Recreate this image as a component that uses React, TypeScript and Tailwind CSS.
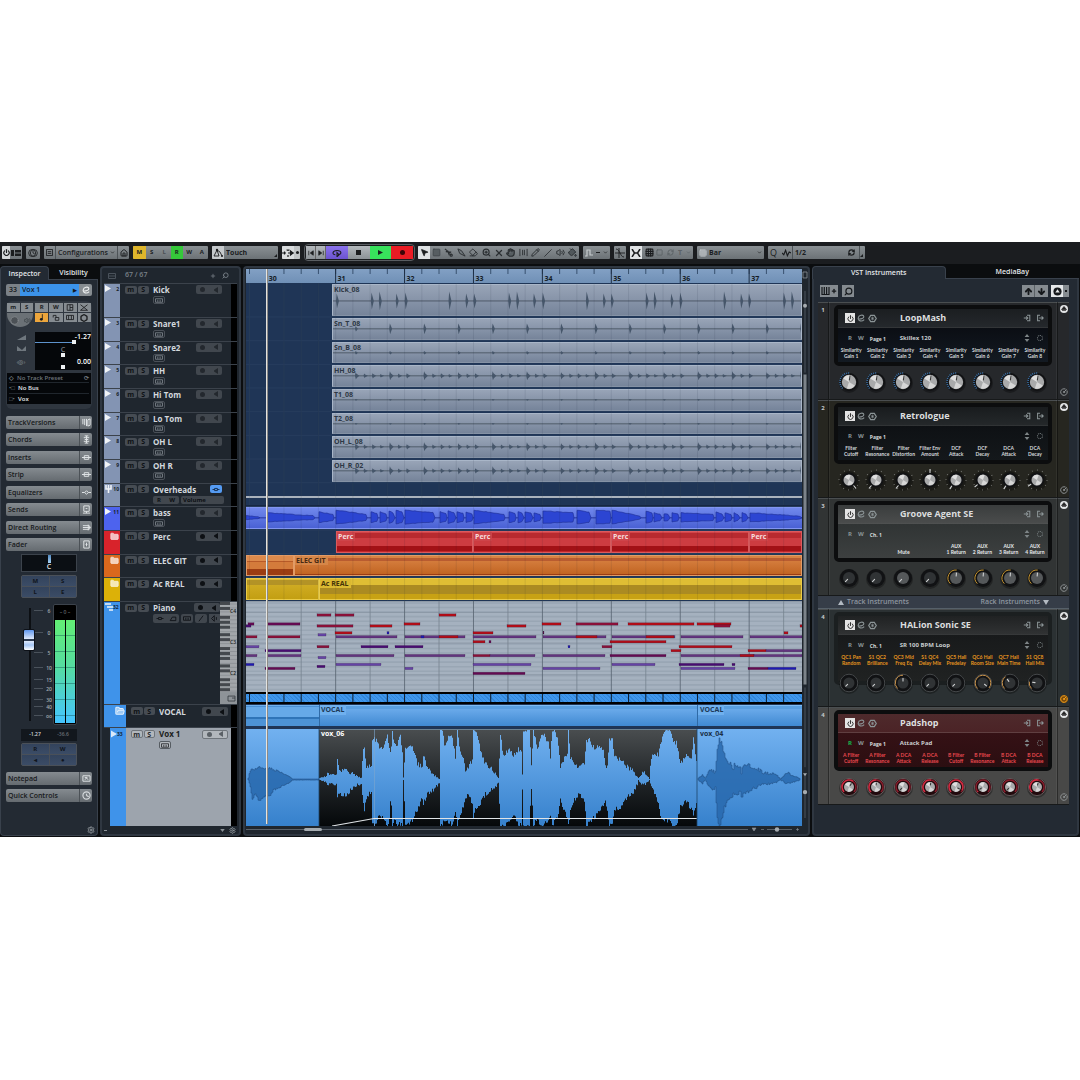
import React from "react";
import {
  ArrowDown,
  ArrowUp,
  ChevronDown,
  Circle,
  CircleGauge,
  Eraser,
  FolderOpen,
  Folder,
  Grid3x3,
  Hand,
  Hexagon,
  Home,
  MousePointer2,
  PaintBucket,
  Pencil,
  Plus,
  Power,
  RefreshCw,
  Search,
  Settings,
  Slash,
  Square,
  Volume2,
  X,
  ZoomIn,
} from "lucide-react";

type Point = [number, number, number];

interface Track {
  num: string;
  name: string;
  color: string;
  kind: "audio" | "group" | "folder";
  clip?: string;
  pattern?: string;
}

const TRACKS: Track[] = [
  { num: "3", name: "Snare1", color: "bg-[#8394b3]", kind: "audio", clip: "Sn_T_08", pattern: "snare" },
  { num: "4", name: "Snare2", color: "bg-[#8394b3]", kind: "audio", clip: "Sn_B_08", pattern: "small" },
  { num: "5", name: "HH", color: "bg-[#8394b3]", kind: "audio", clip: "HH_08", pattern: "hat" },
  { num: "6", name: "Hi Tom", color: "bg-[#8394b3]", kind: "audio", clip: "T1_08", pattern: "flat" },
  { num: "7", name: "Lo Tom", color: "bg-[#8394b3]", kind: "audio", clip: "T2_08", pattern: "flat" },
  { num: "8", name: "OH L", color: "bg-[#8394b3]", kind: "audio", clip: "OH_L_08", pattern: "over" },
  { num: "9", name: "OH R", color: "bg-[#8394b3]", kind: "audio", clip: "OH_R_02", pattern: "over" },
  { num: "10", name: "Overheads", color: "bg-[#8394b3]", kind: "group" },
  { num: "11", name: "bass", color: "bg-[#4d63ee]", kind: "audio" },
  { num: "", name: "Perc", color: "bg-[#d8232b]", kind: "folder" },
  { num: "", name: "ELEC GIT", color: "bg-[#d9681d]", kind: "folder" },
  { num: "", name: "Ac REAL", color: "bg-[#dcb108]", kind: "folder" },
];

// Timeline is 556 units wide, a bar is 69 units and bar 30 starts at 21
const TIMELINE = 556;
const BEATS = Array.from({ length: 32 }, (_, i) => 3.5 + i * 17.23);
const BARS = [30, 31, 32, 33, 34, 35, 36, 37].map((bar, i) => ({ bar, x: 20.7 + i * 68.92 }));

const pct = (x: number) => `${(x / TIMELINE) * 100}%`;

// small repeatable noise so the waves look the same on every render
const noise = (i: number) => {
  const s = Math.sin(i * 127.1 + 11.7) * 43758.5453;
  return s - Math.floor(s);
};

const hits = (pattern: string): [number, number][] => {
  const out: [number, number][] = [];
  if (pattern === "kick") {
    [0, 138, 276, 414].forEach((base) =>
      [0, 35, 43, 60, 69, 113, 130].forEach((x, i) => out.push([90 + base + x, 8 + (i % 3)]))
    );
    return out;
  }
  for (let i = 0; i < 14; i++) {
    const x = 109 + i * 34.4;
    if (pattern === "snare") out.push([x, i === 0 ? 3 : 6]);
    if (pattern === "small") out.push([x, 2]);
    if (pattern === "flat") out.push([x, 1]);
    if (pattern === "hat" || pattern === "over") {
      out.push([x, i % 3 === 0 ? 4 : 5]);
      out.push([x + 8.6, 2.5]);
      out.push([x + 17, 3]);
      if (i % 2 === 0) out.push([x + 25, 2]);
    }
  }
  return out;
};

const hitPath = (pattern: string, mid: number) => {
  const wide = pattern === "hat" || pattern === "over" ? 3.5 : 2;
  return hits(pattern)
    .map(([x, a]) => `M${x - 1} ${mid}L${x - 0.3} ${mid - a}L${x + 0.6} ${mid - a * 0.6}L${x + wide} ${mid}L${x + 0.8} ${mid + a * 0.6}L${x} ${mid + a}Z`)
    .join("");
};

const BASS: [number, number, number, number][] = [
  [0, 14, 3, 1.5], [21, 69, 6, 2.5], [73, 88, 7, 4], [90, 121, 9, 4], [125, 132, 7, 5], [134, 141, 7, 4],
  [143, 149, 8, 5], [150, 158, 9, 6], [159, 189, 9, 6], [194, 201, 7, 5], [202, 210, 8, 5], [211, 218, 7, 5],
  [220, 227, 7, 4], [228, 259, 9, 4], [263, 270, 7, 5], [272, 278, 7, 5], [279, 287, 7, 5], [288, 295, 6, 4],
  [297, 328, 8, 6], [331, 345, 9, 6], [350, 365, 9, 8], [366, 395, 9, 2], [400, 407, 8, 5], [408, 416, 6, 4],
  [418, 424, 5, 4], [426, 433, 6, 4], [435, 468, 6, 4], [470, 478, 7, 4], [479, 486, 6, 4], [488, 494, 6, 3],
  [496, 502, 6, 4], [504, 556, 6, 2],
];

const bassPath = () =>
  BASS.map(([x0, x1, a0, a1]) => {
    let top = `M${x0} 11`;
    let bottom = "";
    for (let x = x0; x < x1; x += 2) {
      const a = a0 + ((a1 - a0) * (x - x0)) / (x1 - x0) - noise(x) * 0.7;
      top += `L${x} ${11 - a}`;
      bottom = `L${x} ${11 + a * 0.8}` + bottom;
    }
    return `${top}L${x1} 11${bottom}Z`;
  }).join("");

// x, upper edge, lower edge
const VOX_MAIN: Point[] = [
  [73, 49, 51], [80, 47, 53], [81, 45, 55], [90, 45, 55], [91, 29, 68], [93, 40, 66], [101, 42, 65], [107, 45, 58],
  [115, 49, 55], [117, 18, 76], [118, 18, 80], [120, 38, 71], [125, 38, 61], [126, 13, 93], [128, 9, 97],
  [131, 13, 90], [134, 20, 85], [137, 20, 91], [141, 8, 97], [143, 18, 91], [144.5, 28, 65], [146, 2, 97],
  [148, 15, 88], [151, 16, 96], [154, 5, 95], [156, 25, 95], [157, 48, 51], [159, 20, 97], [166, 16, 91],
  [171, 35, 81], [176, 38, 68], [177, 25, 75], [181, 38, 65], [186, 45, 61], [193, 50, 55], [194, 1, 97],
  [196, 1, 97], [198, 16, 90], [202, 8, 93], [206, 9, 96], [209, 28, 81], [211, 1, 96], [213, 18, 88],
  [217, 31, 78], [219, 41, 71], [222, 38, 65], [226, 31, 75], [227, 1, 88], [230, 1, 78], [234, 21, 75],
  [239, 35, 65], [246, 41, 60], [252, 49, 55], [254, 5, 97], [257, 28, 97], [263, 20, 93], [267, 28, 85],
  [272, 20, 97], [275, 25, 95], [276, 45, 61], [277, 1, 97], [283, 1, 97], [285, 38, 58], [287, 1, 97],
  [291, 20, 88], [294, 8, 97], [298, 6, 95], [302, 15, 90], [304, 28, 85], [306, 1, 97], [309, 1, 91],
  [312, 15, 85], [314, 38, 71], [318, 28, 81], [321, 25, 88], [322, 1, 97], [324, 28, 81], [328, 35, 71],
  [333, 38, 65], [338, 35, 71], [340, 13, 97], [344, 11, 93], [348, 21, 88], [353, 16, 83], [357, 23, 76],
  [359, 38, 71], [361, 35, 81], [363, 10, 96], [366, 8, 95], [368, 28, 81], [374, 30, 78], [381, 38, 68],
  [387, 42, 63], [391, 48, 55], [392, 49, 51], [396, 43, 56], [400, 45, 55], [403, 50, 51], [405, 28, 58],
  [408, 26, 65], [412, 25, 73], [414, 15, 88], [418, 1, 91], [423, 1, 92], [426, 10, 97], [430, 14, 97],
  [434, 35, 78], [439, 26, 71], [445, 30, 80], [447, 8, 84], [449, 26, 80], [451, 35, 70],
];

const VOX_LEFT: Point[] = [
  [2, 49, 51], [4, 41, 58], [6, 40, 70], [9, 40, 65], [13, 37, 72], [17, 40, 68], [24, 39, 66], [27, 41, 61],
  [32, 42, 59], [37, 45, 56], [42, 47, 54], [46, 50, 51], [73, 50, 51],
];

const VOX_RIGHT: Point[] = [
  [452, 49, 51], [456, 46, 54], [459, 49, 51], [464, 41, 60], [469, 43, 58], [471, 21, 88], [473, 10, 97],
  [476, 16, 88], [478, 26, 78], [481, 33, 73], [485, 35, 68], [487, 41, 65], [488, 35, 66], [494, 38, 63],
  [495, 45, 68], [497, 35, 65], [504, 37, 61], [511, 40, 58], [517, 44, 55], [529, 45, 54], [534, 50, 51],
  [541, 44, 55], [546, 46, 53], [554, 50, 51],
];

const wavePath = (points: Point[], rough: number) => {
  let top = "";
  let bottom = "";
  const first = points[0][0];
  const last = points[points.length - 1][0];
  for (let x = first; x < last; x += 1) {
    const i = Math.max(1, points.findIndex((p) => p[0] >= x));
    const a = points[i - 1];
    const b = points[i];
    const t = b[0] === a[0] ? 0 : (x - a[0]) / (b[0] - a[0]);
    const up = a[1] + (b[1] - a[1]) * t;
    const low = a[2] + (b[2] - a[2]) * t;
    const y0 = Math.max(1, up + (noise(x) - 0.5) * rough * Math.min(1, (50 - up) / 8));
    const y1 = Math.min(97, low + (noise(x + 900) - 0.5) * rough * Math.min(1, (low - 50) / 8));
    top += `${top ? "L" : "M"}${x} ${y0.toFixed(1)}L${x + 1} ${y0.toFixed(1)}`;
    bottom = `L${x + 1} ${y1.toFixed(1)}L${x} ${y1.toFixed(1)}` + bottom;
  }
  return `${top}${bottom}Z`;
};

const RED = "#b00d18";
const WINE = "#8a1038";
const PLUM = "#640a52";
const PURPLE = "#62347f";
const VIOLET = "#6443a6";
const INDIGO = "#480c72";
const BLUE = "#1d1bb4";

// start, end, row, colour
const NOTES: [number, number, number, string][] = [
  [71, 85, 13, WINE], [89, 108, 13, WINE], [193, 210, 13, RED],
  [2, 8, 22, PLUM], [21, 54, 22, PLUM], [158, 174, 22, RED], [296, 315, 22, RED], [330, 372, 22, WINE],
  [382, 448, 22, RED], [451, 485, 22, RED], [0, 5, 24, INDIGO], [71, 107, 24, WINE], [124, 146, 24, RED],
  [261, 280, 24, RED], [468, 484, 24, WINE], [554, 556, 24, RED], [89, 106, 31, RED], [141, 143, 31, BLUE],
  [227, 247, 31, RED], [297, 298, 31, PLUM], [538, 542, 31, RED], [72, 80, 33, VIOLET],
  [0, 11, 35, WINE], [21, 54, 35, WINE], [90, 151, 35, PURPLE], [159, 219, 35, PURPLE], [175, 178, 35, BLUE],
  [193, 212, 35, RED], [227, 290, 35, PURPLE], [297, 360, 35, PURPLE], [330, 351, 35, RED], [366, 429, 35, PURPLE],
  [400, 428, 35, RED], [435, 497, 35, PURPLE], [504, 556, 35, PURPLE], [227, 239, 40, RED], [243, 245, 40, PLUM],
  [364, 420, 40, RED], [0, 13, 45, VIOLET], [71, 83, 45, WINE], [115, 142, 45, INDIGO], [149, 177, 45, INDIGO],
  [322, 324, 45, BLUE], [356, 366, 45, WINE], [433, 486, 45, RED], [19, 55, 49, INDIGO], [425, 435, 49, RED],
  [502, 520, 49, RED], [520, 556, 49, PURPLE], [0, 11, 54, PURPLE], [21, 55, 54, PURPLE], [90, 148, 54, PURPLE],
  [159, 219, 54, PURPLE], [227, 244, 54, WINE], [244, 289, 54, PURPLE], [297, 359, 54, PURPLE], [364, 420, 54, PLUM],
  [435, 508, 54, PURPLE], [494, 508, 54, RED], [508, 556, 54, PURPLE], [72, 80, 56, VIOLET], [0, 8, 63, BLUE],
  [90, 135, 63, VIOLET], [227, 285, 63, VIOLET], [366, 409, 63, VIOLET], [433, 478, 63, INDIGO], [486, 489, 63, INDIGO],
  [71, 79, 65, INDIGO], [19, 49, 67, PLUM], [159, 167, 67, VIOLET], [297, 354, 67, VIOLET], [435, 489, 67, VIOLET],
  [502, 522, 67, PLUM], [522, 550, 67, BLUE], [227, 279, 72, PLUM],
];

interface Instrument {
  id: string;
  num: string;
  name: string;
  page: string;
  preset: string;
  labels: string[];
  rack: string;
  head: string;
  display: string;
  labelColor: string;
  readOn?: boolean;
  orange?: boolean;
  knob: "loop" | "retro" | "groove" | "halion" | "pad";
  turns: number[];
}

const INSTRUMENTS: Instrument[] = [
  {
    id: "loopmash", num: "1", name: "LoopMash", page: "Page 1", preset: "Skillex 120",
    labels: [1, 2, 3, 4, 5, 6, 7, 8].map((n) => `Similarity|Gain ${n}`),
    rack: "bg-[#26282b]", head: "from-[#1b1e21] to-[#24282c]", display: "from-[#0b0e14] to-[#131a22]",
    labelColor: "text-[#d5d9dc]", knob: "loop", turns: [10, 10, 10, 10, 10, 10, 10, 10],
  },
  {
    id: "retrologue", num: "2", name: "Retrologue", page: "Page 1", preset: "",
    labels: ["Filter|Cutoff", "Filter|Resonance", "Filter|Distortion", "Filter Env|Amount", "DCF|Attack", "DCF|Decay", "DCA|Attack", "DCA|Decay"],
    rack: "bg-[#262620]", head: "from-[#191c1e] to-[#24282a]", display: "from-[#0e1114] to-[#14181b]",
    labelColor: "text-[#d5d9dc]", knob: "retro", turns: [140, -140, -140, 0, -145, -130, -145, -125],
  },
  {
    id: "groove", num: "3", name: "Groove Agent SE", page: "Ch. 1", preset: "",
    labels: ["", "", "|Mute", "", "AUX|1 Return", "AUX|2 Return", "AUX|3 Return", "AUX|4 Return"],
    rack: "bg-[#313434]", head: "from-[#3a3d3d] to-[#4a4c4c]", display: "from-[#303434] to-[#3d4040]",
    labelColor: "text-[#e5e8ea]", knob: "groove", turns: [-135, -135, -135, -135, 5, 5, 5, 5],
  },
  {
    id: "halion", num: "4", name: "HALion Sonic SE", page: "Ch. 1", preset: "SR 100 BPM Loop",
    labels: ["QC1 Pan|Random", "S1 QC2|Brilliance", "QC3 Mid|Freq Eq", "S1 QC4|Delay Mix", "QC5 Hall|Predelay", "QC6 Hall|Room Size", "QC7 Hall|Main Time", "S1 QC8|Hall Mix"],
    rack: "bg-[#2b3133]", head: "from-[#202223] to-[#303233]", display: "from-[#181a1b] to-[#202222]",
    labelColor: "text-[#e5951f]", orange: true, knob: "halion", turns: [-135, -135, 0, -135, -135, 130, -35, -80],
  },
  {
    id: "padshop", num: "4", name: "Padshop", page: "Page 1", preset: "Attack Pad",
    labels: ["A Filter|Cutoff", "A Filter|Resonance", "A DCA|Attack", "A DCA|Release", "B Filter|Cutoff", "B Filter|Resonance", "B DCA|Attack", "B DCA|Release"],
    rack: "bg-[#484847]", head: "from-[#4e2a2c] to-[#4b2326]", display: "from-[#351115] to-[#2b0e11]",
    labelColor: "text-[#ea4a50]", readOn: true, knob: "pad", turns: [35, 5, -135, 10, 120, -125, -135, 15],
  },
];

const arc = (r: number, from: number, to: number) => {
  const p = (deg: number) => {
    const a = ((deg - 90) * Math.PI) / 180;
    return `${(12 + r * Math.cos(a)).toFixed(2)} ${(12 + r * Math.sin(a)).toFixed(2)}`;
  };
  return `M${p(from)}A${r} ${r} 0 ${to - from > 180 ? 1 : 0} 1 ${p(to)}`;
};

const Knob = ({ kind, turn, id, lit }: { kind: Instrument["knob"]; turn: number; id: string; lit: boolean }) => {
  const light = kind === "loop" || kind === "retro" || kind === "pad";
  const radius = { loop: 7.2, retro: 5.5, groove: 6, halion: 5.5, pad: 5 }[kind];
  return (
    <div className="relative mx-auto size-6">
      <svg viewBox="0 0 24 24" className="size-6">
        <circle cx="12" cy="13" r="10" fill="#000" opacity=".3" />
        <circle cx="12" cy="12" r={kind === "retro" ? 7.5 : 9} fill={kind === "pad" ? "#210a0d" : "#111214"} />
        {kind === "retro" && (
          <circle cx="12" cy="12" r="10" fill="none" stroke="#7c7d7a" strokeWidth="1.2" strokeDasharray=".8 4.4" />
        )}
        {kind === "loop" && <path d={arc(9, -135, 5)} fill="none" stroke="#3c74ad" strokeWidth="1.6" strokeDasharray="1 1" />}
        {kind === "pad" && <circle cx="12" cy="12" r="8.6" fill="none" stroke="#8c8a8a" strokeWidth=".6" />}
        {kind === "pad" && <path d={arc(7, -135, Math.max(turn, -130))} fill="none" stroke="#d02a40" strokeWidth="1.6" />}
        {kind === "pad" && <path d={arc(7, turn, 135)} fill="none" stroke="#8a1d2c" strokeWidth="1.4" />}
        {kind === "groove" && lit && turn > 0 && <path d={arc(8, -135, 5)} fill="none" stroke="#c8962f" strokeWidth="1" />}
        {kind === "halion" && <circle cx="12" cy="12" r="8.8" fill="none" stroke="#45484a" strokeWidth="1" />}
        {kind === "halion" && turn > -130 && <path d={arc(7.8, -135, turn)} fill="none" stroke="#c9934a" strokeWidth="1" />}
        <circle cx="12" cy="12" r={radius} fill={light ? "#a9aaab" : lit && kind === "groove" ? "#55585a" : "#303335"} />
        {light && <path d={`M12 12L${12 - radius * 0.8} ${12 - radius * 0.5}A${radius} ${radius} 0 0 1 ${12 + radius * 0.3} ${12 - radius * 0.9}Z`} fill="#dedede" />}
        {light && <path d={`M12 12L${12 + radius * 0.8} ${12 + radius * 0.5}A${radius} ${radius} 0 0 1 ${12 - radius * 0.3} ${12 + radius * 0.9}Z`} fill="#d6d6d6" />}
        <g transform={`rotate(${turn} 12 12)`}>
          <path
            d={kind === "retro" ? "M12 1.5V4.5" : `M12 ${12 - radius + 1}V10`}
            stroke={kind === "loop" || kind === "pad" ? "#3a3a3a" : "#d0d2d3"}
            strokeWidth="1.1"
            strokeLinecap="round"
          />
        </g>
      </svg>
      <input id={id} type="range" min={-140} max={140} defaultValue={turn} className="absolute inset-0 size-full cursor-pointer opacity-0" />
    </div>
  );
};

const EditMark = () => (
  <svg viewBox="0 0 10 10" className="size-2">
    <path d="M1 6C5 7 9 5 8.5 3C8 .5 2 1 1.5 5C1 9 6 10 9 7" fill="none" stroke="currentColor" strokeWidth="1.4" />
  </svg>
);

const DoorIcon = ({ out = false }: { out?: boolean }) => (
  <svg viewBox="0 0 10 10" className="size-2">
    <path
      d={out ? "M5 1.5H2V8.5H5M4 5H9M7 3L9 5L7 7" : "M5 1.5H8.5V8.5H5M1 5H6M4 3L6 5L4 7"}
      fill="none"
      stroke="currentColor"
      strokeWidth="1.3"
    />
  </svg>
);

const RackUnit = ({ item }: { item: Instrument }) => (
  <section className={`flex h-[98px] border-b border-[#17191a] shadow-[inset_0_1px_0_#4a4e50] ${item.rack}`}>
    <div className="w-[11px] border-r border-black/40 pt-1 text-center text-[6px] leading-2 font-bold text-[#c3c7ca]">{item.num}</div>
    <div className="min-w-0 flex-1 border-x border-white/5 px-1 pt-[3px]">
      <div
        className={`flex flex-col rounded-[5px] border-4 ${
          item.knob === "halion" ? "h-[73px] border-[#1b1f20] bg-[#202222]" : "h-[61px] border-[#0c0d0e] bg-black"
        }`}
      >
        <header className={`flex h-[19px] shrink-0 items-center border-b border-white/10 bg-linear-to-b pr-1 pl-[7px] text-[#8b9496] ${item.head}`}>
          <button aria-label="Power" className="flex size-[10px] items-center justify-center bg-[#e4e4e4] text-[#1d1d1d]">
            <Power size={7} strokeWidth={3} />
          </button>
          <button aria-label="Edit" className="ml-0.5">
            <EditMark />
          </button>
          <button aria-label="Freeze" className="ml-[3px]">
            <svg viewBox="0 0 10 10" className="size-[9px]">
              <path d="M3 1.5H7L9.2 5L7 8.5H3L.8 5Z" fill="none" stroke="currentColor" strokeWidth="1.3" />
              <path d="M5 3V7M3.2 4L6.8 6M6.8 4L3.2 6" stroke="currentColor" strokeWidth=".8" />
            </svg>
          </button>
          <h2 className="ml-[23px] flex-1 text-[9px] leading-3 font-bold whitespace-nowrap text-[#dcdedf]">{item.name}</h2>
          <button aria-label="Input">
            <DoorIcon />
          </button>
          <button aria-label="Output" className="ml-[5px]">
            <DoorIcon out />
          </button>
        </header>
        <div className={`min-h-0 flex-1 bg-linear-to-b ${item.display}`}>
          <div className="flex h-[19px] items-center pr-[5px] pl-[10px] text-[6px] leading-2 font-bold text-[#8b9496]">
            <button className={item.readOn ? "text-[#12b84c]" : ""}>R</button>
            <button className="ml-1.5">W</button>
            <button className="ml-1.5 w-[30px] pt-0.5 text-left text-[5px] whitespace-nowrap text-[#d8dcde]">{item.page}</button>
            <span className="flex-1 text-[#c8ccce]">{item.preset}</span>
            <svg viewBox="0 0 6 10" className="h-2 w-1.5">
              <path d="M3 0L6 3.6H0ZM3 10L0 6.4H6Z" fill="#7d8486" />
            </svg>
            <span className="ml-[7px] size-1.5 rounded-full border border-dotted border-[#7d8486]" />
          </div>
          <div className="grid grid-cols-8 font-['Lato','Open_Sans',sans-serif]">
            {item.labels.map((label, i) => (
              <label
                key={i}
                htmlFor={`${item.id}-${i}`}
                className={`flex h-3 flex-col items-center text-[5px] leading-[6px] font-bold whitespace-nowrap ${item.labelColor}`}
              >
                {label.split("|").map((line, n) => (
                  <span key={n} className="h-1.5">{line}</span>
                ))}
              </label>
            ))}
          </div>
        </div>
      </div>
      <div className={item.knob === "halion" ? "-mt-3.5 grid grid-cols-8 px-0.5" : "mt-1 grid grid-cols-8 px-0.5"}>
        {item.turns.map((turn, i) => (
          <Knob key={i} id={`${item.id}-${i}`} kind={item.knob} turn={turn} lit={item.knob !== "groove" || i > 3 || i === 2} />
        ))}
      </div>
    </div>
    <div className="flex w-3 flex-col items-center justify-between border-l border-black/40 pt-[3px] pb-[3px]">
      <button aria-label="Collapse" className="flex size-2 items-center justify-center rounded-full bg-[#e3e5e6]">
        <svg viewBox="0 0 8 8" className="size-2">
          <path d="M4 1.5L6.5 4.5H1.5ZM2 5.5H6" fill="#222" stroke="#222" strokeWidth=".7" />
        </svg>
      </button>
      <button aria-label="Quick controls" className={item.orange ? "rounded-full bg-[#7a4a0a] text-[#f0a020]" : "text-[#8c9092]"}>
        <CircleGauge size={8} strokeWidth={3} />
      </button>
    </div>
  </section>
);

const toolButton = "flex h-full flex-1 items-center justify-center";
const group = "flex h-[13px] overflow-hidden rounded-[1px] bg-linear-to-b from-[#8a9094] to-[#6c7276] text-[#1b1d1f]";

const Toolbar = () => (
  <header className="flex h-[22px] items-center gap-1 bg-[#1b1d20] px-0.5 pb-px text-[7px] leading-[13px] font-bold">
    <div className={`${group} w-5`}>
      <button aria-label="Activate" className="flex w-2 items-center justify-center bg-[#d5d8da]">
        <Power size={7} strokeWidth={4} />
      </button>
      <button aria-label="Layout" className={toolButton}>
        <svg viewBox="0 0 10 8" className="h-2 w-[10px]">
          <path d="M0 1H3V7H0ZM4 1H10V3.5H4ZM4 4.5H10V7H4Z" fill="currentColor" />
        </svg>
      </button>
    </div>
    <div className={`${group} w-[14px]`}>
      <button aria-label="Delay compensation" className={toolButton}>
        <svg viewBox="0 0 12 12" className="size-[10px]" fill="none" stroke="currentColor">
          <circle cx="5" cy="6" r="4.2" />
          <circle cx="7" cy="6" r="4.2" />
          <path d="M6 3V6L8 7" />
        </svg>
      </button>
    </div>
    <div className={`${group} w-[85px]`}>
      <button aria-label="Window layout" className="flex w-3 items-center justify-center border-r border-[#4d5357]">
        <svg viewBox="0 0 8 8" className="size-[7px]">
          <path d="M.5.5H7.5V7.5H.5ZM2 3H6M2 5H6" fill="none" stroke="currentColor" />
        </svg>
      </button>
      <select aria-label="Configurations" className="min-w-0 flex-1 appearance-none pl-0.5 font-semibold">
        <option>Configurations</option>
      </select>
      <ChevronDown size={5} strokeWidth={3} className="mr-0.5 self-center" />
      <button aria-label="Home" className="flex w-3 items-center justify-center border-l border-[#4d5357]">
        <Home size={8} strokeWidth={3} />
      </button>
    </div>
    <div className={`${group} w-[75px] text-[6px]`}>
      <button className={`${toolButton} bg-[#dfb62c]`}>M</button>
      <button className={toolButton}>S</button>
      <button className={`${toolButton} text-[#4b5054]`}>L</button>
      <button className={`${toolButton} bg-[#35c83a]`}>R</button>
      <button className={toolButton}>W</button>
      <button className={toolButton}>A</button>
    </div>
    <div className={`${group} w-[66px]`}>
      <button aria-label="Automation" className="flex w-3 items-center justify-center bg-[#c5c9cc]">
        <svg viewBox="0 0 10 10" className="size-[10px]">
          <path d="M1 8L4 2L7 4L9 8M4 2L6 8H1" fill="none" stroke="currentColor" strokeWidth=".9" />
          <circle cx="4" cy="2" r="1.2" fill="currentColor" />
          <circle cx="9" cy="8" r="1" fill="currentColor" />
        </svg>
      </button>
      <select aria-label="Automation mode" className="min-w-0 flex-1 appearance-none pl-0.5">
        <option>Touch</option>
      </select>
      <span className="flex w-1 items-end pb-0.5">
        <CornerMark />
      </span>
    </div>
    <div className={`${group} w-[18px]`}>
      <button aria-label="Auto-scroll" className={`${toolButton} bg-[#d9dcde]`}>
        <svg viewBox="0 0 12 8" className="h-2 w-3">
          <path d="M0 4H4M2.5 2.5V5.5M4.5 1H7.5M6 1V2M6 6V8M6 4H12M8.5 2L11 4L8.5 6Z" fill="currentColor" stroke="currentColor" strokeWidth="1.2" />
        </svg>
      </button>
      <span className="flex w-1.5 items-center justify-center bg-[#c0c4c6]">
        <span className="size-[3px] rounded-full bg-current" />
      </span>
    </div>
    <div className="flex h-[17px] w-[111px] items-stretch rounded-sm border border-[#5a5e62] p-px text-[#1b1d1f]">
      <button aria-label="To left locator" className="flex w-[10px] items-center justify-center border-r border-[#666] bg-linear-to-b from-[#b4b9bd] to-[#8c9296]">
        <svg viewBox="0 0 8 8" className="size-[6px]">
          <path d="M1 1V7M7 1L3 4L7 7Z" fill="currentColor" stroke="currentColor" />
        </svg>
      </button>
      <button aria-label="To right locator" className="flex w-[10px] items-center justify-center border-r border-[#666] bg-linear-to-b from-[#b4b9bd] to-[#8c9296]">
        <svg viewBox="0 0 8 8" className="size-[6px]">
          <path d="M7 1V7M1 1L5 4L1 7Z" fill="currentColor" stroke="currentColor" />
        </svg>
      </button>
      <button aria-label="Cycle" className={`${toolButton} bg-linear-to-b from-[#8a72ee] to-[#6c54cf]`}>
        <svg viewBox="0 0 12 9" className="h-2 w-[10px]">
          <path d="M4 6.5C0 6.5 0 1.5 6 1.5S12 6.5 7 6.5M6 4L8.5 6.5L6 9Z" fill="none" stroke="currentColor" strokeWidth="1.3" />
        </svg>
      </button>
      <button aria-label="Stop" className={`${toolButton} bg-linear-to-b from-[#b4b9bd] to-[#8c9296]`}>
        <span className="size-[5px] bg-current" />
      </button>
      <button aria-label="Play" className={`${toolButton} bg-[#38e25c]`}>
        <svg viewBox="0 0 6 6" className="size-[5px]">
          <path d="M0 0L6 3L0 6Z" fill="currentColor" />
        </svg>
      </button>
      <button aria-label="Record" className={`${toolButton} bg-[#ea1c24]`}>
        <span className="size-[5px] rounded-full bg-[#3c0508]" />
      </button>
    </div>
    <div className={`${group} -ml-px w-[161px]`}>
      {[
        {
          name: "Object selection",
          icon: <MousePointer2 size={9} strokeWidth={2} fill="currentColor" />,
        },
        { name: "Range selection", icon: <Square size={9} strokeWidth={2} fill="#565d61" className="text-[#3d4347]" /> },
        {
          name: "Split",
          icon: (
            <svg viewBox="0 0 10 10" className="size-[9px]" fill="none" stroke="currentColor" strokeWidth="1.3">
              <path d="M1 1L7 6M2 4L8 4.5M4 3L6 8" />
              <circle cx="8" cy="8" r="1.2" />
            </svg>
          ),
        },
        {
          name: "Glue",
          icon: (
            <svg viewBox="0 0 10 10" className="size-[9px]">
              <path d="M1 1L5 3L9 9L3 6Z" fill="#70777b" stroke="currentColor" />
            </svg>
          ),
        },
        { name: "Erase", icon: <Eraser size={9} strokeWidth={2.5} className="-scale-x-100" /> },
        { name: "Zoom", icon: <ZoomIn size={9} strokeWidth={3} /> },
        { name: "Mute", icon: <X size={10} strokeWidth={3} /> },
        { name: "Comp", icon: <Hand size={9} strokeWidth={3} fill="#565d61" /> },
        {
          name: "Time warp",
          icon: (
            <svg viewBox="0 0 10 10" className="size-[9px]">
              <path d="M1 1V9M4 2V8M6 2V8M9 1V9" stroke="currentColor" strokeWidth="1" />
            </svg>
          ),
        },
        { name: "Draw", icon: <Pencil size={9} strokeWidth={2.5} /> },
        { name: "Line", icon: <Slash size={8} strokeWidth={2.5} /> },
        { name: "Play tool", icon: <Volume2 size={9} strokeWidth={2.5} /> },
        { name: "Color", icon: <PaintBucket size={9} strokeWidth={2.5} fill="#50575b" /> },
      ].map((tool, i) => (
        <button key={tool.name} aria-label={tool.name} className={i === 0 ? `${toolButton} bg-[#dfe2e4]` : `${toolButton} text-[#2a2e31]`}>
          {tool.icon}
        </button>
      ))}
    </div>
    <div className={`${group} w-[27px] items-center justify-around`}>
      <svg viewBox="0 0 8 8" className="size-2">
        <path d="M0 7H2V1H5V6H8" fill="none" stroke="#c6cbce" strokeWidth="1.2" />
      </svg>
      <span className="h-px w-1 bg-current" />
      <ChevronDown size={5} strokeWidth={3} />
    </div>
    <div className={`${group} w-3`}>
      <button aria-label="Snap to zero crossing" className={toolButton}>
        <svg viewBox="0 0 10 10" className="size-[10px]">
          <path d="M0 5H10M4 0V10M1 1C5 1 5 9 9 9" fill="none" stroke="currentColor" strokeWidth=".9" />
        </svg>
      </button>
    </div>
    <div className={`${group} w-[63px] items-center`}>
      <button aria-label="Snap" className="flex h-full w-3 items-center justify-center bg-[#e0e3e5]">
        <svg viewBox="0 0 10 8" className="h-2 w-[10px]">
          <path d="M1 0L3.5 4L1 8M9 0L6.5 4L9 8M3 4H7" fill="none" stroke="currentColor" strokeWidth="1.5" />
        </svg>
      </button>
      <Grid3x3 size={9} strokeWidth={3} className="ml-[3px]" />
      <span className="flex flex-1 items-center justify-around text-[#5c6266]">
        <Square size={7} strokeWidth={3} />
        <RefreshCw size={7} strokeWidth={3} />
        <span>T</span>
        <ChevronDown size={5} strokeWidth={3} />
      </span>
    </div>
    <div className={`${group} w-[67px] items-center`}>
      <Grid3x3 size={8} strokeWidth={2.5} className="ml-0.5 text-[#c6cbce]" />
      <select aria-label="Grid type" className="min-w-0 flex-1 appearance-none pl-0.5">
        <option>Bar</option>
      </select>
      <ChevronDown size={5} strokeWidth={3} className="mr-0.5" />
    </div>
    <div className={`${group} w-[97px] items-center`}>
      <span className="ml-0.5 w-2 text-[9px] font-normal">Q</span>
      <svg viewBox="0 0 10 8" className="ml-1 h-2 w-[9px]">
        <path d="M0 4L2 6L4 1L6 7L8 3L10 4" fill="none" stroke="currentColor" strokeWidth="1.3" />
      </svg>
      <select aria-label="Quantize" className="ml-px min-w-0 flex-1 appearance-none self-stretch border-l border-[#4d5357] pl-0.5">
        <option>1/2</option>
      </select>
      <RefreshCw size={7} strokeWidth={4} />
      <span className="ml-1 flex h-full w-1.5 items-end border-l border-[#4d5357] pb-0.5">
        <CornerMark />
      </span>
    </div>
  </header>
);

const CornerMark = () => (
  <svg viewBox="0 0 3 3" className="size-[3px]">
    <path d="M3 0V3H0Z" fill="currentColor" />
  </svg>
);

const INSPECTOR_SECTIONS = ["TrackVersions", "Chords", "Inserts", "Strip", "Equalizers", "Sends", "Direct Routing", "Fader"];

const SectionIcon = ({ name }: { name: string }) => {
  const shapes: Record<string, string> = {
    TrackVersions: "M1 1V7M3 1V8M5 1V9M6.5 2L9 1V8L6.5 9Z",
    Chords: "M3 1H7M2 3H8M3 5H7M2 7H8M3 9H7M5 1V9",
    Inserts: "M0 5H10M2.5 3H7.5V7H2.5Z",
    Strip: "M0 5H10M2.5 3H7.5V7H2.5Z",
    Equalizers: "M0 5H3L5 3L7 5H10M3 5L5 7L7 5",
    Sends: "M2 1H8V7H2ZM5 7V9M1 9H9M4 4H6",
    "Direct Routing": "M1 3H7M1 5H9M1 7H7M7 2L9.5 5L7 8Z",
    Fader: "M2 1H8V9H2ZM5 3V7M4 5H6",
    Notepad: "M1 2H9V8H1ZM3 6L5 5L7 6M3 4H6",
  };
  return (
    <svg viewBox="0 0 10 10" className="size-[9px]">
      {name === "Quick Controls" ? (
        <g fill="none" stroke="#d5d9dc" strokeWidth="1.3">
          <circle cx="5" cy="5" r="4" />
          <path d="M5 5L7.5 6.5M5 3V5" />
        </g>
      ) : (
        <path d={shapes[name]} fill="none" stroke="#dfe3e5" strokeWidth="1.1" />
      )}
    </svg>
  );
};

const SectionButton = ({ name }: { name: string }) => (
  <button className="flex h-[13px] w-full items-center rounded-xs bg-linear-to-b from-[#858b90] to-[#656b70] text-left text-[7px] leading-[13px] font-semibold text-[#17191b]">
    <span className="flex-1 pl-0.5">{name}</span>
    <span className="flex h-full w-[13px] items-center justify-center border-l border-[#4c5257]">
      <SectionIcon name={name} />
    </span>
  </button>
);

const SCALE = [
  { mark: "6", y: 4 }, { mark: "0", y: 26 }, { mark: "5", y: 46 }, { mark: "10", y: 61 }, { mark: "15", y: 73 },
  { mark: "20", y: 82 }, { mark: "30", y: 93 }, { mark: "40", y: 100 }, { mark: "oo", y: 109 },
];

const small = "h-full bg-[#868c91] text-center text-[6px] leading-[9px] font-bold text-[#1b1d1f]";
const padButton = "h-[10px] bg-linear-to-b from-[#33435c] to-[#3b4c66] text-[6px] leading-[10px] font-bold text-[#10151d]";

const Inspector = () => (
  <aside className="flex w-[98px] shrink-0 flex-col">
    <nav className="flex h-[14px] text-[7px] leading-[12px] font-semibold text-[#e4e7ea]">
      <button className="w-1/2 rounded-t-sm border border-b-0 border-[#39414c] bg-[#232a33]">Inspector</button>
      <button className="w-1/2 border-b border-[#39414c]">Visibility</button>
    </nav>
    <div className="flex flex-1 flex-col rounded-b-sm border border-t-0 border-[#39414c] bg-[#232a33] px-[5px] pt-1">
      <div className="flex h-3 text-[7px] leading-3 font-semibold text-[#15191d]">
        <span className="w-[14px] rounded-l-xs bg-[#7b8187] text-center">33</span>
        <span className="flex-1 bg-[#3b93ea] pl-0.5">Vox 1</span>
        <span className="bg-[#3b93ea] pr-0.5 text-[5px]">▶</span>
        <button aria-label="Edit channel" className="flex w-[13px] items-center justify-center rounded-r-xs bg-[#868c91] text-[#eceeef]">
          <EditMark />
        </button>
      </div>
      <div className="mt-[5px] flex h-[108px] flex-col rounded-md bg-[#2f363f] px-px pt-0.5">
        <div className="flex h-[19px] gap-0.5">
          <div className="w-[26px]">
            <div className="grid h-[9px] grid-cols-2 gap-px">
              <button className={small}>m</button>
              <button className={small}>S</button>
            </div>
            <div className="mt-px flex h-[14px] items-center justify-around rounded-b-full bg-[#6b7176]">
              <Circle size={9} fill="#4c5156" stroke="#85898d" />
              <Volume2 size={7} strokeWidth={3} className="text-[#44494e]" />
            </div>
          </div>
          <div className="grid flex-1 grid-cols-4 grid-rows-2 gap-px">
            <button className={small}>R</button>
            <button className={small}>W</button>
            <button aria-label="Lanes" className={`${small} flex items-center justify-center`}>
              <FaceIcon d="M1 1H9V9H1ZM5 1V9M5 5H9" />
            </button>
            <button aria-label="Musical" className={`${small} flex items-center justify-center`}>
              <FaceIcon d="M0 1L10 9M10 1L0 9M0 9H10" />
            </button>
            <button aria-label="Timebase" className="flex h-full items-center justify-center bg-[#eda63c] text-[#1b1d1f]">
              <svg viewBox="0 0 6 8" className="h-[7px] w-[5px]">
                <path d="M4 0V6" stroke="currentColor" />
                <circle cx="2.8" cy="6.2" r="1.7" fill="currentColor" />
              </svg>
            </button>
            <button aria-label="Lock" className={`${small} flex items-center justify-center`}>
              <FaceIcon d="M4 5H9V9H4ZM5 5V2H1V5" />
            </button>
            <button aria-label="Keys" className={`${small} flex items-center justify-center`}>
              <FaceIcon d="M0 2H10V8H0ZM3 2V8M7 2V8" />
            </button>
            <button aria-label="Freeze" className={`${small} flex items-center justify-center`}>
              <Hexagon size={8} strokeWidth={4} />
            </button>
          </div>
        </div>
        <div className="mt-2.5 flex h-[38px] text-[7px] leading-[9px] font-semibold text-white">
          <div className="flex flex-1 flex-col items-center justify-around text-[#6f777e]">
            <svg viewBox="0 0 9 5" className="h-[5px] w-[9px]"><path d="M0 5L9 0V5Z" fill="currentColor" /></svg>
            <svg viewBox="0 0 9 5" className="h-[5px] w-[9px]"><path d="M0 0V5H9V0L5 4Z" fill="currentColor" /></svg>
            <span className="text-[6px]">‹◎›</span>
          </div>
          <div className="flex w-14 flex-col bg-[#05070a]">
            <Slider label="Volume" value={71} text="-1.27" align="text-right" filled />
            <Slider label="Pan" value={50} text="C" align="text-center text-[#777e85]" />
            <Slider label="Delay" value={50} text="0.00" align="text-right" />
          </div>
        </div>
        <div className="mt-[3px] grid h-[31px] grid-rows-3 bg-[#05070a] px-0.5 text-[6px] leading-[10px] font-semibold text-[#e4e7ea]">
          <span className="flex justify-between border-b border-[#20262d] text-[#6f767c]">
            <span>◇&nbsp; No Track Preset</span>
            <span>⟳</span>
          </span>
          <span className="border-b border-[#20262d]"><span className="text-[#6f767c]">•□</span>&nbsp; No Bus</span>
          <span><span className="text-[#6f767c]">□•</span>&nbsp; Vox</span>
        </div>
      </div>
      <div className="mt-[7px] flex h-[135px] flex-col justify-between">
        {INSPECTOR_SECTIONS.map((name) => (
          <SectionButton key={name} name={name} />
        ))}
      </div>
      <div className="mx-auto mt-[3px] flex h-[18px] w-14 flex-col items-center border border-[#3c434c] bg-[#0b0f14] text-[7px] leading-2 font-semibold text-[#e4e7ea]">
        <span className="h-2 w-[3px] bg-linear-to-b from-[#4f88c0] to-[#a8d2f5]" />
        C
      </div>
      <div className="mx-auto mt-[3px] grid w-14 grid-cols-2 gap-px rounded-xs border border-[#4a5058] bg-[#4a5058]">
        <button className={padButton}>M</button>
        <button className={padButton}>S</button>
        <button className={padButton}>L</button>
        <button className={padButton}>E</button>
      </div>
      <div className="mx-auto mt-1.5 flex h-[121px] w-14">
        <div className="relative w-3">
          <span className="absolute inset-y-1 left-2 w-0.5 bg-[#0c0f13]" />
          <input
            type="range"
            aria-label="Channel fader"
            defaultValue={77}
            className="absolute top-1 left-0.5 h-[114px] w-3 appearance-none bg-transparent [direction:rtl] [writing-mode:vertical-lr] [&::-webkit-slider-thumb]:h-[22px] [&::-webkit-slider-thumb]:w-3 [&::-webkit-slider-thumb]:appearance-none [&::-webkit-slider-thumb]:rounded-xs [&::-webkit-slider-thumb]:border [&::-webkit-slider-thumb]:border-[#0d1118] [&::-webkit-slider-thumb]:bg-[linear-gradient(to_bottom,#5f96ee,#dfe9fa_45%,#2b3a52_45%_55%,#dfe9fa_55%,#a5c6f5_75%,#ffffff)]"
          />
        </div>
        <svg viewBox="0 0 20 121" className="h-[121px] w-5">
          {SCALE.map((s) => (
            <g key={s.mark}>
              <path d={`M1 ${s.y + 2.5}H10`} stroke="#4a525b" />
              <text x="16" y={s.y + 4.5} textAnchor="middle" fontSize="5" fontWeight="600" fill="#a5acb2">{s.mark}</text>
            </g>
          ))}
        </svg>
        <div className="flex w-6 flex-col rounded-xs border border-[#3c434c] bg-black p-px">
          <span className="h-[14px] text-center text-[5px] leading-3 text-[#8a9096]">– 0 –</span>
          <div className="grid flex-1 grid-cols-2 gap-px">
            {[0, 1].map((n) => (
              <span
                key={n}
                className="bg-[repeating-linear-gradient(to_bottom,transparent_0_15px,#0b4a4a66_15px_16px),linear-gradient(to_bottom,#62ee74,#55dca0_45%,#45c4ff)]"
              />
            ))}
          </div>
        </div>
      </div>
      <div className="mx-auto mt-1 flex h-3 w-14 items-center justify-around bg-[#12171d] text-[5px] font-semibold text-[#d5dade]">
        <span>-1.27</span>
        <span className="text-[#6a7178]">-36.6</span>
      </div>
      <div className="mx-auto mt-0.5 grid w-14 grid-cols-2 gap-px rounded-xs border border-[#4a5058] bg-[#4a5058]">
        <button className={padButton}>R</button>
        <button className={padButton}>W</button>
        <button className={padButton}>◂</button>
        <button className={padButton}>●</button>
      </div>
      <div className="mt-1.5 flex flex-col gap-1">
        <SectionButton name="Notepad" />
        <SectionButton name="Quick Controls" />
      </div>
      <button aria-label="Inspector setup" className="-mr-[3px] mt-auto mb-px self-end text-[#8c9298]">
        <Settings size={8} strokeWidth={3} />
      </button>
    </div>
  </aside>
);

const Slider = ({ label, value, text, align, filled }: { label: string; value: number; text: string; align: string; filled?: boolean }) => (
  <label className="flex flex-1 flex-col">
    <span className={`h-2 ${align}`}>{text}</span>
    <input
      type="range"
      aria-label={label}
      defaultValue={value}
      className={`h-1 w-full appearance-none [&::-webkit-slider-thumb]:size-1 [&::-webkit-slider-thumb]:appearance-none [&::-webkit-slider-thumb]:bg-[#eef1f3] ${
        filled ? "bg-[linear-gradient(#5d92cc,#5d92cc)] bg-[length:71%_1px] bg-[position:0_50%] bg-no-repeat" : "bg-transparent"
      }`}
    />
  </label>
);

const FaceIcon = ({ d }: { d: string }) => (
  <svg viewBox="0 0 10 10" className="h-[7px] w-2">
    <path d={d} fill="none" stroke="currentColor" strokeWidth="1.2" />
  </svg>
);

const MuteSolo = ({ light = false }: { light?: boolean }) => (
  <div className={`grid h-2 w-6 grid-cols-2 gap-px text-[7px] leading-[7px] font-bold ${light ? "text-[#26292c]" : "text-[#0d1014]"}`}>
    <button className={light ? "rounded-xs border border-[#6f757b] bg-[#b2b7bc] leading-[5px]" : "rounded-xs bg-[#464c53]"}>m</button>
    <button className={light ? "rounded-xs border border-[#6f757b] bg-[#b2b7bc] leading-[5px]" : "rounded-xs bg-[#464c53]"}>S</button>
  </div>
);

const RecMonitor = ({ dim = false, light = false }: { dim?: boolean; light?: boolean }) => (
  <div
    className={`flex h-[9px] w-[26px] items-center justify-around rounded-xs ${
      light ? "border border-[#6f757b] bg-[#b2b7bc] text-[#5a6066]" : dim ? "bg-[#41474e] text-[#23282e]" : "bg-[#41474e] text-[#0d1014]"
    }`}
  >
    <button aria-label="Record enable" className="size-[5px] rounded-full bg-current" />
    <button aria-label="Monitor">
      <svg viewBox="0 0 4 6" className="h-1.5 w-1">
        <path d="M4 0V6L0 3.6V2.4Z" fill="currentColor" />
      </svg>
    </button>
  </div>
);

const KeysButton = ({ light = false }: { light?: boolean }) => (
  <button
    aria-label="Musical timebase"
    className={`flex h-2 w-3 items-center justify-center rounded-xs border ${light ? "border-[#565c62] bg-[#b2b7bc] text-[#26292c]" : "border-[#4a5058] text-[#7d848b]"}`}
  >
    <FaceIcon d="M0 2.5H10V7.5H0ZM3.3 4V7M6.6 4V7" />
  </button>
);

const TrackFlag = ({ track }: { track: Track }) => (
  <div className={`flex w-4 shrink-0 justify-between pt-px pr-px text-[5px] leading-2 font-bold text-[#161d28] ${track.color}`}>
    {track.kind === "folder" && <Folder size={9} strokeWidth={2} className="ml-1.5 text-white/70" fill="currentColor" />}
    {track.kind === "audio" && (
      <svg viewBox="0 0 7 8" className="ml-px h-[7px] w-1.5">
        <path d="M0 0L7 4L0 8Z" fill="#f0f3f7" />
      </svg>
    )}
    {track.kind === "group" && (
      <svg viewBox="0 0 7 8" className="ml-px h-2 w-[7px]">
        <path d="M1 0V4H6V0M3.5 0V8" fill="none" stroke="#f0f3f7" strokeWidth="1.6" />
      </svg>
    )}
    {track.num && <span>{track.num}</span>}
  </div>
);

const trackName = "flex-1 truncate text-[8px] leading-[9px] font-bold text-[#d3d8dd]";

const TrackRow = ({ track }: { track: Track }) => (
  <li className="flex min-h-0 border-t border-[#3b424b]">
    <TrackFlag track={track} />
    <div className="min-w-0 flex-1 pt-px pl-[5px]">
      <div className="flex items-center">
        <MuteSolo />
        <span className={`ml-1 ${trackName}`}>{track.name}</span>
        {track.kind === "group" ? (
          <button aria-label="Inserts state" className="mr-[9px] flex h-2 w-3 items-center justify-center rounded-xs bg-[#559bf2] text-[#10233c]">
            <FaceIcon d="M0 5H3M7 5H10M3 3.5H7V6.5H3Z" />
          </button>
        ) : (
          <span className="mr-[9px]">
            <RecMonitor dim={track.kind === "audio"} />
          </span>
        )}
      </div>
      {track.kind === "audio" && (
        <div className="mt-0.5 ml-7">
          <KeysButton />
        </div>
      )}
      {track.kind === "group" && (
        <div className="mt-0.5 ml-7 flex gap-0.5 text-[6px] leading-2 font-bold">
          <div className="flex w-[26px] justify-around rounded-xs bg-[#41474e] text-[#0d1014]">
            <button>R</button>
            <button>W</button>
          </div>
          <button className="w-[43px] rounded-xs bg-[#41474e] pl-0.5 text-left text-[#0d1014]">Volume</button>
        </div>
      )}
    </div>
    <span className="w-1.5 bg-black" />
  </li>
);

const PianoKeys = () => (
  <svg viewBox="0 0 17 103" preserveAspectRatio="none" className="w-[17px] self-stretch">
    <rect width="17" height="103" fill="#a2a6aa" />
    {Array.from({ length: 23 }, (_, i) => (
      <path key={i} d={`M0 ${2 + i * 4}H17`} stroke="#7b8085" strokeWidth=".5" />
    ))}
    {[0, 1, 2].map((o) => (
      <g key={o} fill="#44484d">
        {[0, 5, 14, 19, 24].map((y) => (
          <rect key={y} y={o * 31.5 + y} width="10" height="3" />
        ))}
      </g>
    ))}
    {["C4", "C3", "C2"].map((c, i) => (
      <text key={c} x="10" y={11 + i * 31.5} fontSize="5" fontWeight="600" fill="#1c1f22">{c}</text>
    ))}
    <rect y="91" width="17" height="12" fill="#8e9398" />
    <path d="M8 95H15V100H8ZM12 97H15" fill="none" stroke="#33373c" strokeWidth=".8" />
  </svg>
);

const TrackList = () => (
  <section className="flex w-[141px] shrink-0 flex-col rounded-sm border-2 border-[#2f3741] bg-[#1f262e] px-0.5">
    <div className="flex h-[15px] items-center pl-1 text-[7px] font-semibold text-[#7a828a]">
      <svg viewBox="0 0 8 6" className="h-1.5 w-2"><path d="M.5.5H7.5V5.5H.5ZM.5 3H7.5" fill="none" stroke="#4a525b" /></svg>
      <span className="ml-[9px] flex-1">67 / 67</span>
      <button aria-label="Add track" className="mr-1.5"><Plus size={6} strokeWidth={3} /></button>
      <button aria-label="Find track" className="mr-2"><Search size={7} strokeWidth={3} className="-scale-x-100" /></button>
    </div>
    <ul className="grid h-[34px]">
      <TrackRow track={{ num: "2", name: "Kick", color: "bg-[#8394b3]", kind: "audio" }} />
    </ul>
    <ul className="grid h-[284px] grid-rows-12">
      {TRACKS.map((track) => (
        <TrackRow key={track.name} track={track} />
      ))}
    </ul>
    <div className="flex h-[103px] border-t border-[#3b424b]">
      <div className="flex w-4 shrink-0 bg-[#3f93ea] pt-px pl-px text-[5px] leading-2 font-bold text-[#13263c]">
        <svg viewBox="0 0 8 8" className="h-2 w-2 shrink-0"><path d="M0 1H6M2 4H8M4 7H8" stroke="#f0f3f7" strokeWidth="1.5" /></svg>
        32
      </div>
      <div className="min-w-0 flex-1 pt-px pl-[5px]">
        <div className="flex items-center">
          <MuteSolo />
          <span className={`ml-1 ${trackName}`}>Piano</span>
          <RecMonitor />
        </div>
        <div className="mt-0.5 ml-7 flex gap-0.5 text-[#0d1014]">
          <span className="flex h-[9px] w-[26px] items-center justify-around rounded-xs bg-[#41474e]">
            <FaceIcon d="M0 5H3M7 5H10M3 3.5H7V6.5H3Z" />
            <FaceIcon d="M1 8L4 3L9 3V8Z" />
          </span>
          <span className="flex h-[9px] w-3 items-center justify-center rounded-xs bg-[#41474e]"><FaceIcon d="M0 2.5H10V7.5H0ZM3.3 4V7M6.6 4V7" /></span>
          <span className="flex h-[9px] w-3 items-center justify-center rounded-xs bg-[#41474e]"><FaceIcon d="M2 9L8 1" /></span>
          <span className="flex h-[9px] flex-1 items-center justify-center bg-[#41474e]"><FaceIcon d="M4 1L0 5L4 9ZM7 3V7" /></span>
        </div>
      </div>
      <PianoKeys />
    </div>
    <div className="flex h-[23px] border-t border-[#3b424b]">
      <div className="w-[22px] bg-[#3f93ea] pt-px pl-[11px] text-[#e2effc]"><FolderOpen size={10} strokeWidth={2.5} fill="#9cc9f5" /></div>
      <div className="flex flex-1 items-start pt-0.5 pl-[5px]">
        <MuteSolo />
        <span className={`ml-1 ${trackName}`}>VOCAL</span>
        <span className="mr-[3px]"><RecMonitor /></span>
      </div>
      <span className="w-1.5 bg-black" />
    </div>
    <div className="flex h-[99px] border-t border-[#3b424b] pl-1.5">
      <div className="flex w-4 bg-[#3f93ea] pt-0.5 pl-px text-[5px] leading-2 font-bold text-[#13263c]">
        <svg viewBox="0 0 7 8" className="h-2 w-1.5 shrink-0"><path d="M0 0L7 4L0 8Z" fill="#d9e9fa" /></svg>
        33
      </div>
      <div className="flex-1 bg-[#9da4ad] pt-px pl-[5px]">
        <div className="flex items-center">
          <MuteSolo light />
          <span className="ml-1 flex-1 text-[8px] leading-[10px] font-bold text-[#1b1e21]">Vox 1</span>
          <span className="mr-[3px]"><RecMonitor light /></span>
        </div>
        <div className="mt-0.5 ml-7"><KeysButton light /></div>
      </div>
      <span className="w-1.5 bg-black" />
    </div>
    <div className="flex h-2 items-center justify-end gap-1 pr-px leading-none text-[#8c9298]">
      <span className="mr-auto h-px w-[3px] bg-current" />
      <svg viewBox="0 0 6 4" className="h-[3px] w-[5px]"><path d="M0 0H6L3 4Z" fill="currentColor" /></svg>
      <Settings size={7} strokeWidth={3} />
    </div>
  </section>
);

const clipText = "absolute top-0 left-px text-[7px] leading-[9px] font-bold text-[#2e3845]";

const DrumLane = ({ label, pattern, mid, height }: { label: string; pattern: string; mid: number; height: number }) => (
  <div className="relative min-h-0 py-px">
    <div
      className="relative ml-auto h-full border border-[#a9b6c8] border-b-[#8592a5] bg-linear-to-b from-[#98a4b7] to-[#76849a]"
      style={{ width: pct(TIMELINE - 86) }}
    >
      <svg viewBox={`86 0 470 ${height}`} preserveAspectRatio="none" className="absolute inset-0 size-full">
        <path d={`M86 ${mid}H556`} stroke="#46515f" strokeWidth=".9" />
        <path d={hitPath(pattern, mid)} fill="#46566a" />
      </svg>
      <span className={clipText}>{label}</span>
    </div>
  </div>
);

const Arrange = () => (
  <section className="relative flex min-w-0 flex-1 flex-col rounded-sm border-2 border-[#2f3741] bg-[#1f262e] pt-px pl-px">
    <div className="mr-[6px]">
      <div className="relative h-[14px] bg-linear-to-b from-[#82a0c4] to-[#7090b6]">
        <svg viewBox="0 0 556 14" preserveAspectRatio="none" className="absolute inset-0 size-full">
          {BEATS.map((x) => <path key={x} d={`M${x} 0V5`} stroke="#38516f" />)}
          {BARS.map(({ x }) => <path key={x} d={`M${x} 0V14`} stroke="#1e2f45" />)}
        </svg>
        {BARS.map(({ bar, x }) => (
          <span key={bar} className="absolute bottom-0 pl-0.5 text-[7px] leading-[9px] font-bold text-[#151c25]" style={{ left: pct(x) }}>{bar}</span>
        ))}
      </div>
      <div className="relative h-[543px] overflow-hidden bg-[#1f3556]">
        <svg viewBox="0 0 556 318" preserveAspectRatio="none" className="absolute inset-x-0 top-0 h-[318px] w-full">
          {BEATS.map((x) => <path key={x} d={`M${x} 0V318`} stroke="#2c425c" strokeWidth=".7" />)}
          {TRACKS.map((t, i) => <path key={t.name} d={`M0 ${34 + i * 23.67}H556`} stroke="#2a3f5f" strokeWidth=".8" />)}
        </svg>
        <div className="grid h-[34px] grid-rows-1">
          <DrumLane label="Kick_08" pattern="kick" mid={17} height={32} />
        </div>
        <div className="grid h-[284px] grid-rows-12">
          {TRACKS.slice(0, 7).map((t) => (
            <DrumLane key={t.name} label={t.clip || ""} pattern={t.pattern || "flat"} mid={11} height={22} />
          ))}
          <div className="relative min-h-0 border-b border-[#172742] pt-[13px]">
            <div className="h-0.5 bg-[#aab2bc]" />
          </div>
          <div className="relative min-h-0 py-px">
            <div className="relative h-full border-y border-[#8295f0] bg-linear-to-b from-[#7188ec] to-[#4a61d4]">
              <svg viewBox="0 0 556 22" preserveAspectRatio="none" className="absolute inset-0 size-full">
                <path d="M0 11H556" stroke="#22329c" />
                <path d={bassPath()} fill="#2c45d2" stroke="#20309a" strokeWidth=".7" />
              </svg>
            </div>
          </div>
          <div className="relative min-h-0">
            {[[90, 137], [227, 138], [365, 138], [503, 53]].map(([x, w]) => (
              <div
                key={x}
                className="absolute inset-y-px border border-[#dc5b5e] bg-[linear-gradient(to_bottom,#d24449_0_1px,#b82a2f_1px_6px,#cd3c41_6px_14px,#a21116_14px_19px,#c2262b_19px)]"
                style={{ left: pct(x), width: pct(w) }}
              >
                <span className="block w-[18px] bg-[#cf444a] pl-px text-[7px] leading-[9px] font-bold text-[#f6dcdc]">Perc</span>
              </div>
            ))}
          </div>
          <div className="relative min-h-0">
            <div className="absolute inset-y-px left-0 border border-[#e29b66] bg-[linear-gradient(to_bottom,#dd8a4c_0_5px,#b85a28_5px_6px,#d47b3b_6px_13px,#9c3d12_13px_19px,#b55a22_19px)]" style={{ width: pct(48) }} />
            <div className="absolute inset-y-px right-0 border border-[#e29b66] bg-[linear-gradient(to_bottom,#d78343_0_2px,#b95c30_2px_5px,#d47c3c_5px,#c16523_18px,#9c3d12_18px)]" style={{ left: pct(48) }}>
              <span className="block w-[33px] bg-[#d68648] pl-px text-[7px] leading-[9px] font-bold whitespace-nowrap text-[#4a2a14]">ELEC GIT</span>
            </div>
          </div>
          <div className="relative min-h-0">
            <div className="absolute inset-y-px left-0 border border-[#eacb48] bg-[linear-gradient(to_bottom,#dcbb33_0_1px,#b39326_1px_6px,#cfab22_6px,#c39f12)]" style={{ width: pct(73) }} />
            <div className="absolute inset-y-px right-0 border border-[#eacb48] bg-[linear-gradient(to_bottom,#dfbe34_0_6px,#ab8b22_6px_15px,#c8a214_15px)]" style={{ left: pct(73) }}>
              <span className="block w-[31px] bg-[#dbb932] pl-px text-[7px] leading-[9px] font-bold whitespace-nowrap text-[#443408]">Ac REAL</span>
            </div>
          </div>
        </div>
        <div className="h-[92px] border-b border-black bg-[#a5b1bf]">
          <svg viewBox="0 0 556 92" preserveAspectRatio="none" className="size-full">
            {Array.from({ length: 20 }, (_, i) => <path key={i} d={`M0 ${2 + i * 4.6}H556`} stroke="#99a6b4" strokeWidth="1.6" />)}
            <path d="M0 .5H556M0 11.5H556M0 42.5H556M0 74.5H556" stroke="#7f8b99" strokeWidth=".6" />
            {BEATS.filter((_, i) => i % 2 === 1).map((x, i) => (
              <path key={x} d={`M${x} 0V92`} stroke={i % 2 === 0 ? "#56616f" : "#76828f"} strokeWidth=".8" />
            ))}
            {NOTES.map(([a, b, y, fill], i) => (
              <rect key={i} x={a} y={y} width={b - a} height="2.4" fill={fill} stroke="#2d1030" strokeWidth=".2" />
            ))}
          </svg>
        </div>
        <div className="h-[11px] border-t border-b-2 border-black bg-[repeating-linear-gradient(45deg,#3f96ec_0_2px,#3286d8_2px_3px)]">
          <svg viewBox="0 0 556 8" preserveAspectRatio="none" className="size-full">
            {BEATS.map((x) => <path key={x} d={`M${x} 0V8`} stroke="#0c1c2e" strokeWidth="1" />)}
          </svg>
        </div>
        <div className="relative h-[23px]">
          <div className="absolute inset-y-px left-0 bg-[linear-gradient(to_bottom,#6fb0ee_0_1px,#4a8fd4_1px_2px,#66a9e8_2px_12px,#2f74b8_12px_14px,#4d93d6_14px)]" style={{ width: pct(73) }} />
          <div className="absolute inset-y-px border-l border-[#2f6aa6] bg-[linear-gradient(to_bottom,#7ebcf5_0_1px,#5a9fe0_1px_4px,#6aaaea_4px,#4089d2)]" style={{ left: pct(73), width: pct(378) }}>
            <span className="block w-[26px] bg-[#6fb0ee] pl-px text-[7px] leading-[10px] font-bold text-[#1e3a57]">VOCAL</span>
          </div>
          <div className="absolute inset-y-px right-0 border-l border-[#2f6aa6] bg-[linear-gradient(to_bottom,#7ebcf5_0_1px,#5a9fe0_1px_4px,#6aaaea_4px,#4089d2)]" style={{ left: pct(451) }}>
            <span className="block w-[26px] bg-[#6fb0ee] pl-0.5 text-[7px] leading-[10px] font-bold text-[#1e3a57]">VOCAL</span>
          </div>
        </div>
        <div className="relative h-[99px] pt-0.5">
          <svg viewBox="0 0 556 97" preserveAspectRatio="none" className="size-full">
            <defs>
              <linearGradient id="clip" x1="0" y1="0" x2="0" y2="97" gradientUnits="userSpaceOnUse">
                <stop offset="0" stopColor="#72b1f0" />
                <stop offset="1" stopColor="#3681cc" />
              </linearGradient>
              <linearGradient id="dark" x1="0" y1="0" x2="0" y2="1">
                <stop offset="0" stopColor="#4a4e50" />
                <stop offset=".5" stopColor="#23272a" />
                <stop offset="1" stopColor="#05080a" />
              </linearGradient>
            </defs>
            <rect width="556" height="97" fill="url(#clip)" />
            <rect x="73" width="378" height="97" fill="url(#dark)" />
            <path d="M73 .5H451" stroke="#6d8292" />
            <path d={wavePath(VOX_MAIN, 5)} fill="url(#clip)" />
            <path d={wavePath(VOX_LEFT, 2)} fill="#2869ae" stroke="#1e4c80" strokeWidth=".6" opacity=".85" />
            <path d={wavePath(VOX_RIGHT, 4)} fill="#2869ae" stroke="#1e4c80" strokeWidth=".6" opacity=".85" />
            <path d="M128.5 0V97" stroke="#7da6cc" strokeWidth=".6" />
            <path d="M86 97L128 89.5H451" fill="none" stroke="#dfe3e6" strokeWidth="1.1" />
            <path d="M73 0V97M451 0V97" stroke="#1d4469" strokeWidth=".8" />
          </svg>
          <span className="absolute top-0.5 pl-0.5 text-[7px] leading-[10px] font-bold text-white" style={{ left: pct(73) }}>vox_06</span>
          <span className="absolute top-0.5 pl-0.5 text-[7px] leading-[10px] font-bold text-[#1b3047]" style={{ left: pct(452) }}>vox_04</span>
        </div>
        {/* faint beat grid lies over the clips */}
        <svg viewBox="0 0 556 318" preserveAspectRatio="none" className="pointer-events-none absolute inset-x-0 top-0 h-[318px] w-full">
          {BEATS.map((x) => <path key={x} d={`M${x} 0V318`} stroke="#101c30" strokeOpacity=".12" strokeWidth=".8" />)}
        </svg>
      </div>
      <div className="flex h-[7px] items-center text-[#8c9298]">
        <div className="relative h-px flex-1 bg-[#5a626b]">
          <span className="absolute -top-px left-[58px] h-[3px] w-[18px] rounded-xs bg-[#a6acb1]" />
        </div>
        <svg viewBox="0 0 50 7" className="ml-1 h-[7px] w-[50px]">
          <path d="M0 2H4L2 5ZM9 3.5H12M44 3.5H47M45.5 2V5" fill="currentColor" stroke="currentColor" strokeWidth=".6" />
          <path d="M15 3.5H40" stroke="#5a626b" />
          <circle cx="25" cy="3.5" r="2.2" fill="#a6acb1" />
        </svg>
      </div>
    </div>
    <div className="pointer-events-none absolute top-px bottom-[10px] left-[21px] w-0.5 border-r border-[#8d8a86] bg-[#e3e3e0]" />
    <div className="absolute top-px right-0 bottom-[10px] w-1.5">
      <svg viewBox="0 0 6 557" preserveAspectRatio="none" className="size-full">
        <path d="M1 3H5V9H1Z" fill="none" stroke="#8c9298" strokeWidth=".8" />
        <path d="M3 22V104M3 420V500M3 508V551" stroke="#4d555e" />
        <circle cx="3" cy="37" r="2" fill="#a6acb1" />
        <path d="M3 106V417" stroke="#7c838a" strokeWidth="3" />
        <path d="M1 506H5L3 509Z" fill="#a6acb1" />
        <circle cx="3" cy="525" r="2.2" fill="#a6acb1" />
      </svg>
    </div>
  </section>
);

const Rack = () => (
  <aside className="flex w-[267px] shrink-0 flex-col">
    <nav className="flex h-[13px] text-[7px] leading-3 font-semibold text-[#e4e7ea]">
      <button className="w-1/2 rounded-t-sm border border-b-0 border-[#39414c] bg-[#232a33]">VST Instruments</button>
      <button className="w-1/2 border-b border-[#39414c]">MediaBay</button>
    </nav>
    <div className="flex-1 rounded-b-sm border-2 border-t-0 border-[#2f3741] bg-[#232a33] px-1 pt-1.5">
      <div className="flex h-3 items-center text-[#15181b]">
        <button aria-label="Add instrument" className="ml-0.5 flex h-3 w-[18px] items-center justify-center gap-px bg-[#858b90]">
          <svg viewBox="0 0 9 8" className="h-2 w-[9px]"><path d="M1 0V8M3.3 0V8M5.6 0V8M8 0V8M1 7.5H8" stroke="currentColor" strokeWidth="1.2" /></svg>
          <Plus size={6} strokeWidth={5} />
        </button>
        <button aria-label="Find instrument" className="ml-1 flex size-3 items-center justify-center bg-[#858b90]">
          <Search size={9} strokeWidth={3} className="-scale-x-100" />
        </button>
        <button aria-label="Previous" className="ml-auto flex h-3 w-[13px] items-center justify-center border-r border-[#5b6166] bg-[#858b90]"><ArrowUp size={9} strokeWidth={5} /></button>
        <button aria-label="Next" className="flex h-3 w-[13px] items-center justify-center bg-[#858b90]"><ArrowDown size={9} strokeWidth={5} /></button>
        <button aria-label="Show quick controls" className="ml-[3px] flex size-3 items-center justify-center bg-[#e4e7e9]">
          <svg viewBox="0 0 10 10" className="size-[9px]"><circle cx="5" cy="5" r="4.5" fill="#15181b" /><path d="M5 2.5L7.5 6H2.5Z" fill="#e4e7e9" /></svg>
        </button>
        <span className="mr-1 flex h-3 w-1.5 items-center justify-center bg-[#858b90]"><span className="size-0.5 bg-current" /></span>
      </div>
      <div className="mt-[5px] mr-1">
        {INSTRUMENTS.slice(0, 3).map((item) => <RackUnit key={item.id} item={item} />)}
        <div className="flex h-[13px] items-center justify-between border-b border-[#566069] bg-[#363d48] pr-5 pl-5 text-[7px] font-semibold text-[#8d959f]">
          <span className="flex items-center gap-[3px]">
            <svg viewBox="0 0 6 5" className="h-[5px] w-1.5"><path d="M3 0L6 5H0Z" fill="#b3bac2" /></svg>
            Track Instruments
          </span>
          <span className="flex items-center gap-[3px]">
            Rack Instruments
            <svg viewBox="0 0 6 5" className="h-[5px] w-1.5"><path d="M0 0H6L3 5Z" fill="#b3bac2" /></svg>
          </span>
        </div>
        {INSTRUMENTS.slice(3).map((item) => <RackUnit key={item.id} item={item} />)}
      </div>
    </div>
  </aside>
);

const App = () => {
  return (
    <main className="flex min-h-screen flex-col justify-center bg-white pb-px font-['Open_Sans','Noto_Sans',sans-serif]">
      <div className="bg-[#0b0d0f]">
        <Toolbar />
        <div className="flex gap-0.5 pt-0.5 pr-px pb-px">
          <Inspector />
          <TrackList />
          <Arrange />
          <Rack />
        </div>
      </div>
    </main>
  );
};

export default App;
